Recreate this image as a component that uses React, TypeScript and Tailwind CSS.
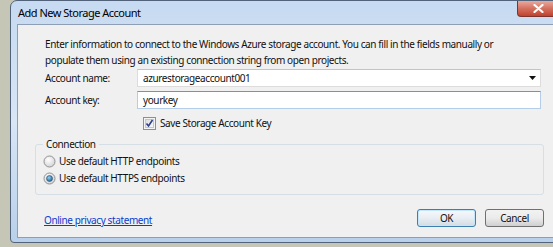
const font = { fontFamily: '"Noto Sans", "Open Sans", Arial, sans-serif' };

function CheckBox() {
  return (
    <svg width="13" height="13" viewBox="0 0 13 13" className="shrink-0">
      <defs>
        <linearGradient id="cb" x1="0" y1="0" x2="1" y2="1">
          <stop offset="0" stopColor="#dcdcdc" />
          <stop offset="1" stopColor="#fbfbfb" />
        </linearGradient>
      </defs>
      <rect x="0.5" y="0.5" width="12" height="12" fill="#f4f4f4" stroke="#8e8f8f" />
      <rect x="2.5" y="2.5" width="8" height="8" fill="url(#cb)" stroke="#c6c6c6" />
      <path d="M3.5 6.5 L5.5 9 L9.5 3" fill="none" stroke="#2a3f8a" strokeWidth="1.6" />
    </svg>
  );
}

function Radio({ checked }: { checked?: boolean }) {
  return (
    <svg width="13" height="13" viewBox="0 0 13 13" className="shrink-0">
      <defs>
        <radialGradient id="rb" cx="0.4" cy="0.35" r="0.7">
          <stop offset="0" stopColor="#ffffff" />
          <stop offset="1" stopColor="#d2d2d2" />
        </radialGradient>
        <radialGradient id="rd" cx="0.4" cy="0.35" r="0.7">
          <stop offset="0" stopColor="#8fd3f8" />
          <stop offset="1" stopColor="#1c5d8f" />
        </radialGradient>
      </defs>
      <circle cx="6.5" cy="6.5" r="5.5" fill="url(#rb)" stroke="#929292" />
      {checked && <circle cx="6.5" cy="6.5" r="3" fill="url(#rd)" stroke="#2a4f6b" strokeWidth="0.6" />}
    </svg>
  );
}

export default function App() {
  return (
    <div className="w-[553px] h-[247px] overflow-hidden bg-[#c6c6b6] pl-[10px] text-[10px] tracking-[-0.4px] text-[#111] whitespace-nowrap" style={font}>
      <div className="w-[556px] h-[243px] flex flex-col rounded-t-[7px] rounded-b-[4px] border border-[#52627a] bg-gradient-to-b from-[#c6daf1] via-[#d8e6f6] to-[#b9d0ea]">
        <div className="h-[23px] flex items-start">
          <span className="pl-[7px] pt-[4px] text-[11px] tracking-[-0.5px] text-black">Add New Storage Account</span>
          <div className="ml-auto mr-[5px] w-[43px] h-[16px] rounded-b-[4px] border border-t-0 border-[#7d342c] bg-gradient-to-b from-[#e8aa9e] via-[#d5705f] to-[#c0402e] flex items-center justify-center">
            <svg width="11" height="9" viewBox="0 0 11 9">
              <path d="M1.5 1 L9.5 8 M9.5 1 L1.5 8" stroke="#ffffff" strokeWidth="2.2" strokeLinecap="round" />
            </svg>
          </div>
        </div>

        <div className="ml-[6px] mr-[6px] h-[214px] border border-[#8e9fb5] bg-[#f0f0f0] flex flex-col">
          <p className="pl-[27px] pt-[11px] leading-[16px]">
            Enter information to connect to the Windows Azure storage account. You can fill in the fields manually or
            <br />
            populate them using an existing connection string from open projects.
          </p>

          <div className="pl-[27px] mt-[1px] flex items-center">
            <span className="w-[92px]">Account name:</span>
            <div className="w-[404px] h-[18px] bg-white border border-[#dcdcdc] border-t-[#c4c4c4] flex items-center pl-[5px] pr-[4px]">
              <span>azurestorageaccount001</span>
              <svg className="ml-auto" width="7" height="4" viewBox="0 0 7 4">
                <path d="M0 0 H7 L3.5 4 Z" fill="#111" />
              </svg>
            </div>
          </div>

          <div className="pl-[27px] mt-[4px] flex items-center">
            <span className="w-[92px]">Account key:</span>
            <div className="w-[404px] h-[18px] bg-white border border-[#b4cde8] border-t-[#6d94c2] flex items-center pl-[5px]">
              <span>yourkey</span>
            </div>
          </div>

          <div className="pl-[125px] mt-[6px] flex items-center gap-[4px] h-[16px]">
            <CheckBox />
            <span>Save Storage Account Key</span>
          </div>

          <fieldset className="ml-[17px] mt-[5px] w-[509px] border border-[#d5dfe5] rounded-[3px] px-[7px] pb-[7px]">
            <legend className="px-[3px] leading-[16px]">Connection</legend>
            <div className="h-[17px] mt-[1px] flex items-center gap-[3px]">
              <Radio />
              <span>Use default HTTP endpoints</span>
            </div>
            <div className="h-[17px] flex items-center gap-[3px]">
              <Radio checked />
              <span>Use default HTTPS endpoints</span>
            </div>
          </fieldset>

          <div className="mt-[13px] ml-[26px] w-[500px] flex items-center">
            <a className="text-[#0b3ccf] underline mt-[5px]">Online privacy statement</a>
            <div className="ml-auto flex gap-[9px]">
              <button className="w-[59px] h-[18px] rounded-[3px] border border-[#3c7fb1] bg-gradient-to-b from-[#f6f9fc] via-[#e8eef3] to-[#d3dbe2] shadow-[inset_0_0_0_1px_#c4e6fa] leading-none">OK</button>
              <button className="w-[59px] h-[18px] rounded-[3px] border border-[#707070] bg-gradient-to-b from-[#f2f2f2] via-[#ebebeb] to-[#cfcfcf] leading-none">Cancel</button>
            </div>
          </div>
        </div>
      </div>
    </div>
  );
}
